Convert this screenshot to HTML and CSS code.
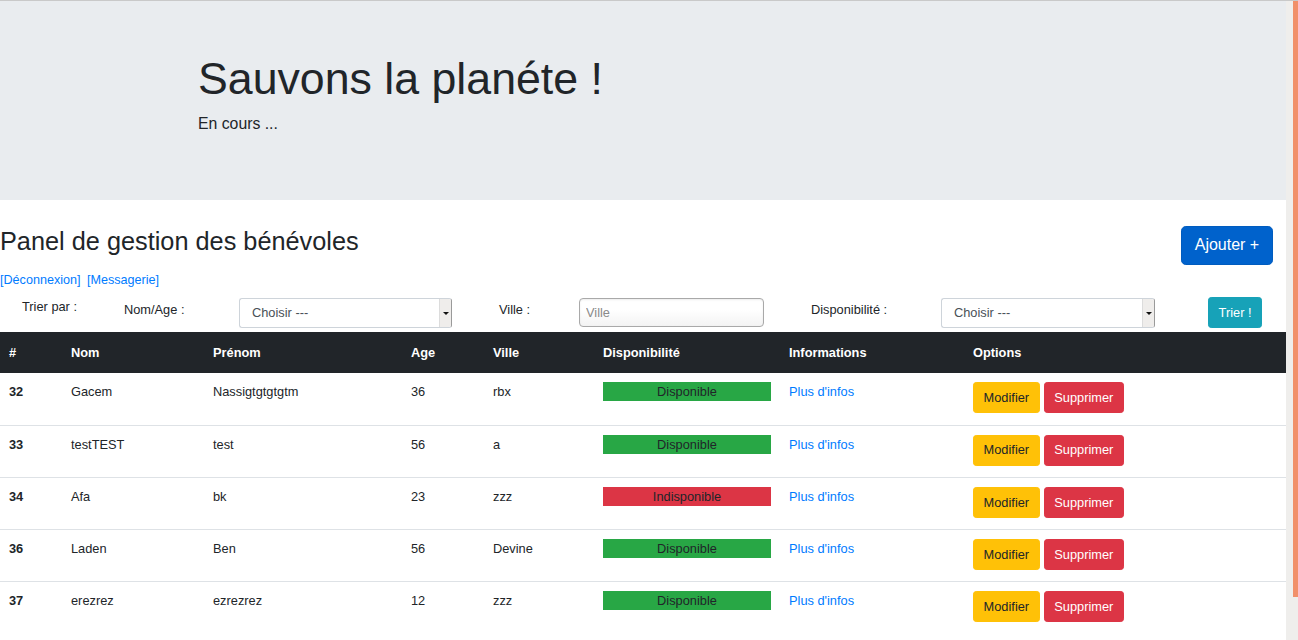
FILE: index.html
```html
<!DOCTYPE html>
<html lang="fr">
<head>
<meta charset="utf-8">
<title>Sauvons la planéte !</title>
<link rel="stylesheet" href="styles.css">
</head>
<body>
<div class="screen">
  <div class="page">
    <header class="jumbotron">
      <div class="container">
        <h1 class="display">Sauvons la planéte !</h1>
        <p class="lead">En cours ...</p>
      </div>
    </header>

    <section class="panel">
      <div class="panel-head">
        <h2 class="panel-title">Panel de gestion des bénévoles</h2>
        <button class="btn btn-lg btn-primary" type="button">Ajouter +</button>
      </div>
      <div class="links">
        <a href="#">[Déconnexion]</a>
        <a href="#" class="link-gap">[Messagerie]</a>
      </div>

      <form class="filters">
        <span class="label label-first">Trier par :</span>
        <span class="label">Nom/Age :</span>
        <div class="select">
          <span class="select-value">Choisir ---</span>
          <span class="select-arrow"><span class="caret"></span></span>
        </div>
        <span class="label label-pad">Ville :</span>
        <input class="input" type="text" placeholder="Ville">
        <span class="label label-pad">Disponibilité :</span>
        <div class="select">
          <span class="select-value">Choisir ---</span>
          <span class="select-arrow"><span class="caret"></span></span>
        </div>
        <div class="submit-cell">
          <button class="btn btn-info" type="button">Trier !</button>
        </div>
      </form>

      <table class="table">
        <colgroup>
          <col class="c-id"><col class="c-nom"><col class="c-prenom"><col class="c-age">
          <col class="c-ville"><col class="c-dispo"><col class="c-info"><col>
        </colgroup>
        <thead>
          <tr>
            <th>#</th><th>Nom</th><th>Prénom</th><th>Age</th><th>Ville</th>
            <th>Disponibilité</th><th>Informations</th><th>Options</th>
          </tr>
        </thead>
        <tbody>
          <tr>
            <th class="row-id">32</th><td>Gacem</td><td>Nassigtgtgtgtm</td><td>36</td><td>rbx</td>
            <td><div class="status status-on">Disponible</div></td>
            <td><a href="#">Plus d'infos</a></td>
            <td><div class="actions"><button class="btn btn-warning" type="button">Modifier</button><button class="btn btn-danger" type="button">Supprimer</button></div></td>
          </tr>
          <tr>
            <th class="row-id">33</th><td>testTEST</td><td>test</td><td>56</td><td>a</td>
            <td><div class="status status-on">Disponible</div></td>
            <td><a href="#">Plus d'infos</a></td>
            <td><div class="actions"><button class="btn btn-warning" type="button">Modifier</button><button class="btn btn-danger" type="button">Supprimer</button></div></td>
          </tr>
          <tr>
            <th class="row-id">34</th><td>Afa</td><td>bk</td><td>23</td><td>zzz</td>
            <td><div class="status status-off">Indisponible</div></td>
            <td><a href="#">Plus d'infos</a></td>
            <td><div class="actions"><button class="btn btn-warning" type="button">Modifier</button><button class="btn btn-danger" type="button">Supprimer</button></div></td>
          </tr>
          <tr>
            <th class="row-id">36</th><td>Laden</td><td>Ben</td><td>56</td><td>Devine</td>
            <td><div class="status status-on">Disponible</div></td>
            <td><a href="#">Plus d'infos</a></td>
            <td><div class="actions"><button class="btn btn-warning" type="button">Modifier</button><button class="btn btn-danger" type="button">Supprimer</button></div></td>
          </tr>
          <tr>
            <th class="row-id">37</th><td>erezrez</td><td>ezrezrez</td><td>12</td><td>zzz</td>
            <td><div class="status status-on">Disponible</div></td>
            <td><a href="#">Plus d'infos</a></td>
            <td><div class="actions"><button class="btn btn-warning" type="button">Modifier</button><button class="btn btn-danger" type="button">Supprimer</button></div></td>
          </tr>
        </tbody>
      </table>
    </section>
  </div>
  <div class="scrollbar"><div class="thumb"></div></div>
</div>
</body>
</html>
```

FILE: styles.css
```css
html, body {
  margin: 0;
  padding: 0;
  overflow: hidden;
  background: #fff;
}

body {
  font-family: "Liberation Sans", Arial, sans-serif;
  font-size: 12.8px;
  line-height: 19.2px;
  color: #212529;
}

.screen {
  display: flex;
  height: 640px;
  box-sizing: border-box;
  border-top: 1px solid #c9c9c9;
}

.page {
  flex: 1;
  min-width: 0;
  overflow: hidden;
}

.scrollbar {
  width: 12px;
  flex: none;
  background: #efeeec;
  display: flex;
  justify-content: flex-end;
}

.thumb {
  width: 5px;
  height: 596px;
  background: #f1906a;
}

/* Jumbotron */
.jumbotron {
  background: #e9ecef;
  padding: 51.2px 0;
}

.container {
  box-sizing: border-box;
  max-width: 936px;
  margin: 0 auto;
  padding: 0 12px 0 23px;
}

.display {
  font-size: 44.7px;
  line-height: 53.76px;
  font-weight: 300;
  margin: 0 0 6.4px;
}

.lead {
  font-size: 15.8px;
  line-height: 24px;
  font-weight: 300;
  margin: 0 0 12.8px;
}

/* Panel */
.panel {
  margin-top: 25.6px;
}

.panel-head {
  display: flex;
  justify-content: space-between;
  align-items: flex-start;
  padding-right: 13px;
}

.panel-title {
  font-size: 25.3px;
  line-height: 30.72px;
  font-weight: 500;
  margin: 0;
}

a {
  color: #007bff;
  text-decoration: none;
}

.links {
  margin-top: 6.6px;
  line-height: 19.2px;
  font-size: 12.6px;
}

.link-gap {
  margin-left: 3px;
}

/* Buttons */
.btn {
  font-family: inherit;
  font-size: 12.8px;
  line-height: 19.2px;
  padding: 4.8px 9.6px;
  border: 1px solid transparent;
  border-radius: 3.2px;
  cursor: pointer;
  display: inline-block;
}

.btn-lg {
  font-size: 16px;
  line-height: 24px;
  padding: 6.4px 12.8px;
  border-radius: 4.8px;
}

.btn-primary {
  background: #0062cc;
  border-color: #005cbf;
  color: #fff;
}

.btn-info {
  background: #17a2b8;
  border-color: #17a2b8;
  color: #fff;
}

.btn-warning {
  background: #ffc107;
  border-color: #ffc107;
  color: #212529;
}

.btn-danger {
  background: #dc3545;
  border-color: #dc3545;
  color: #fff;
}

/* Filters */
.filters {
  margin: 6.8px 0 0;
  display: grid;
  grid-template-columns: 124px 115px 213px 127px 185px 177px 214px 1fr;
  align-items: start;
  height: 31px;
}

.label {
  margin-top: 3px;
  line-height: 19.2px;
}

.label-first {
  margin-top: 0;
  padding-left: 22px;
}

.label-pad {
  padding-left: 47px;
}

.select {
  margin-top: 1px;
  height: 30px;
  box-sizing: border-box;
  display: flex;
  border: 1px solid #ced4da;
  border-right-color: #9a9a9a;
  border-radius: 3px;
  background: #fff;
  overflow: hidden;
}

.select-value {
  flex: 1;
  padding-left: 12px;
  line-height: 28px;
  color: #495057;
}

.select-arrow {
  width: 11px;
  flex: none;
  background: #efedeb;
  border-left: 1px solid #dcdcdc;
  display: flex;
  align-items: center;
  justify-content: center;
}

.caret {
  width: 0;
  height: 0;
  border-left: 3px solid transparent;
  border-right: 3px solid transparent;
  border-top: 3px solid #111;
}

.input {
  margin-top: 1px;
  height: 29px;
  width: 185px;
  box-sizing: border-box;
  border: 1px solid #a9a9a9;
  border-radius: 4px;
  padding: 0 6px;
  font-family: inherit;
  font-size: 12.8px;
  color: #495057;
  background: linear-gradient(#fff 40%, #f3f3f3);
  box-shadow: inset 0 1px 2px rgba(0, 0, 0, 0.08);
}

.input::placeholder {
  color: #8a8a8a;
}

.submit-cell {
  padding-left: 53px;
}

/* Table */
.table {
  margin-top: 4px;
  width: 100%;
  border-collapse: collapse;
  table-layout: fixed;
}

.c-id { width: 62px; }
.c-nom { width: 142px; }
.c-prenom { width: 198px; }
.c-age { width: 82px; }
.c-ville { width: 110px; }
.c-dispo { width: 186px; }
.c-info { width: 184px; }

.table thead th {
  background: #212529;
  color: #fff;
  font-weight: 700;
  text-align: left;
  padding: 11px 9px 9px;
  line-height: 20px;
  vertical-align: top;
}

.table tbody td,
.table tbody th {
  border-top: 1px solid #dee2e6;
  padding: 9px 9px 11.3px;
  vertical-align: top;
  text-align: left;
  line-height: 19.2px;
}

.table tbody tr:first-child td,
.table tbody tr:first-child th {
  border-top-color: #212529;
}

.row-id {
  font-weight: 700;
}

.status {
  text-align: center;
  line-height: 19px;
  color: #212529;
}

.status-on {
  background: #28a745;
}

.status-off {
  background: #dc3545;
}

.actions {
  display: flex;
  gap: 4px;
}

.actions .btn {
  height: 31px;
  line-height: 19.2px;
  padding-top: 0;
  padding-bottom: 0;
  box-sizing: border-box;
}
```
